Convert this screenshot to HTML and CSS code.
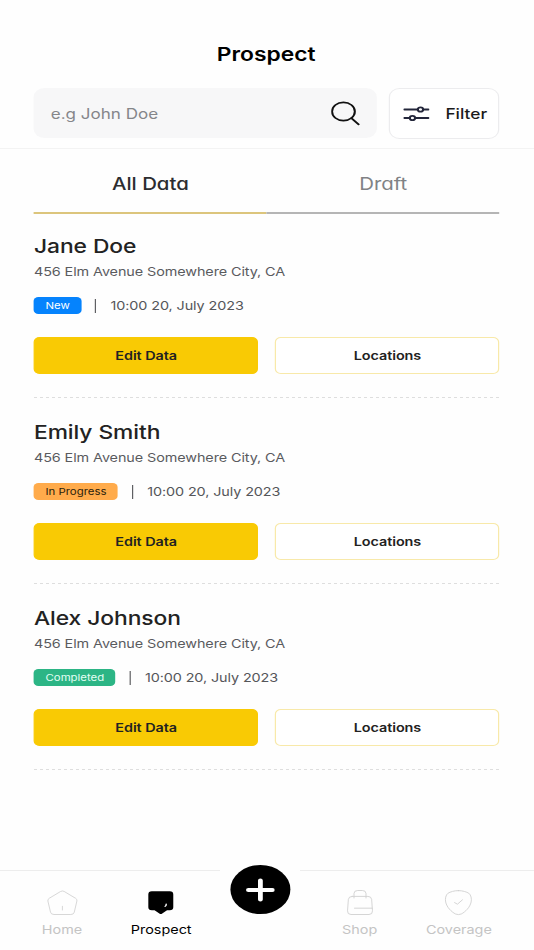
FILE: index.html
```
<!DOCTYPE html>
<html lang="en">
<head>
  <meta charset="UTF-8" />
  <title>Prospect</title>
  <link rel="stylesheet" href="styles.css">
</head>
<body>

<div class="app">
  <header class="header">
    <h1>Prospect</h1>
    <div class="search-row">
      <div class="search">
        <span class="placeholder">e.g John Doe</span>
        <svg class="search-icon" width="24" height="25" viewBox="0 0 24 25" fill="none" stroke="#111" stroke-width="1.7" stroke-linecap="round">
          <ellipse cx="10.2" cy="10.5" rx="9.5" ry="9.2" />
          <path d="M16.8 17.2L22.8 23.4" />
        </svg>
      </div>
      <button class="filter">
        <svg width="22" height="16" viewBox="0 0 22 16" fill="none" stroke="#23263a" stroke-width="1.8" stroke-linecap="round">
          <path d="M1 3.5H12M17 3.5H21M1 12H5.2M10.2 12H21" />
          <circle cx="14.4" cy="3.5" r="2.2" />
          <circle cx="7.7" cy="12" r="2.2" />
        </svg>
        <span>Filter</span>
      </button>
    </div>
  </header>

  <nav class="tabs">
    <a class="tab active">All Data</a>
    <a class="tab">Draft</a>
  </nav>

  <main class="list">
    <section class="item">
      <h2>Jane Doe</h2>
      <p class="address">456 Elm Avenue Somewhere City, CA</p>
      <div class="meta">
        <span class="badge new">New</span>
        <span class="divider"></span>
        <span class="date">10:00 20, July 2023</span>
      </div>
      <div class="actions">
        <button class="btn edit">Edit Data</button>
        <button class="btn outline">Locations</button>
      </div>
    </section>

    <section class="item">
      <h2>Emily Smith</h2>
      <p class="address">456 Elm Avenue Somewhere City, CA</p>
      <div class="meta">
        <span class="badge progress">In Progress</span>
        <span class="divider"></span>
        <span class="date">10:00 20, July 2023</span>
      </div>
      <div class="actions">
        <button class="btn edit">Edit Data</button>
        <button class="btn outline">Locations</button>
      </div>
    </section>

    <section class="item">
      <h2>Alex Johnson</h2>
      <p class="address">456 Elm Avenue Somewhere City, CA</p>
      <div class="meta">
        <span class="badge completed">Completed</span>
        <span class="divider"></span>
        <span class="date">10:00 20, July 2023</span>
      </div>
      <div class="actions">
        <button class="btn edit">Edit Data</button>
        <button class="btn outline">Locations</button>
      </div>
    </section>
  </main>

  <nav class="bottom-nav">
    <a class="nav-item">
      <svg width="26" height="26" viewBox="0 0 26 26" fill="none" stroke="#d2d2d2" stroke-width="0.8" stroke-linecap="round" stroke-linejoin="round">
        <path d="M11.6 1.4Q13 .4 14.4 1.4L24 8.3Q25.5 9.4 25.1 11L22.9 22.2Q22.5 24.5 20 24.5H6Q3.5 24.5 3.1 22.2L.9 11Q.5 9.4 2 8.3Z" />
        <path d="M13 16.3V20" />
      </svg>
      <span>Home</span>
    </a>
    <a class="nav-item active">
      <svg width="26" height="26" viewBox="0 0 26 26">
        <path d="M5.5 1.2H20.5Q23.4 1.2 23.4 4.4V17.2Q23.4 20.2 20.5 20.2H18.2L14.2 23.6Q13 24.6 11.8 23.6L7.8 20.2H5.5Q2.6 20.2 2.6 17.2V4.4Q2.6 1.2 5.5 1.2Z" fill="#000" />
        <path d="M17.5 14.2Q17.6 15.6 16.6 16.4" fill="none" stroke="#fff" stroke-width="1.2" stroke-linecap="round" />
      </svg>
      <span>Prospect</span>
    </a>
    <a class="add">
      <svg width="24" height="24" viewBox="0 0 24 24" fill="none" stroke="#fff" stroke-width="4" stroke-linecap="round">
        <path d="M12 2.4V21.6M2 12H22" />
      </svg>
    </a>
    <a class="nav-item">
      <svg width="26" height="26" viewBox="0 0 26 26" fill="none" stroke="#cfcfcf" stroke-width="0.8" stroke-linecap="round" stroke-linejoin="round">
        <path d="M6.4 6.4H19.6Q22.4 6.4 22.7 9.4L23.4 20.8Q23.6 24.5 20.5 24.5H5.5Q2.4 24.5 2.6 20.8L3.3 9.4Q3.6 6.4 6.4 6.4Z" />
        <path d="M8 8V3.6Q8 .5 11 .5H15Q18 .5 18 3.6V8M8.4 18.2H23.2" />
      </svg>
      <span>Shop</span>
    </a>
    <a class="nav-item">
      <svg width="26" height="26" viewBox="0 0 26 26" fill="none" stroke="#cfcfcf" stroke-width="0.8" stroke-linecap="round" stroke-linejoin="round">
        <path d="M13 .6C16.5 .6 19.8 1.9 21.6 3.2C23.6 4.8 24.2 9.2 23.6 12C22.6 17.5 18.8 21.8 15.4 24Q13 25.2 10.6 24C7.2 21.8 3.4 17.5 2.4 12C1.8 9.2 2.4 4.8 4.4 3.2C6.2 1.9 9.5 .6 13 .6Z" />
        <path d="M9.8 12.6L12.2 14.2L16.4 9.8" />
      </svg>
      <span>Coverage</span>
    </a>
  </nav>
</div>

</body>
</html>
```
FILE: styles.css
```
* {
  box-sizing: border-box;
}

body {
  margin: 0;
  background: #fefefe;
  font-family: Inter, "Liberation Sans", sans-serif;
  color: #222;
  overflow: hidden;
}

/* laid out at 445px and stretched to the full 534px */
.app {
  width: 445px;
  height: 950px;
  display: flex;
  flex-direction: column;
  transform: scaleX(1.2);
  transform-origin: 0 0;
}

h1, h2, p {
  margin: 0;
}

button {
  font-family: inherit;
  padding: 0;
  cursor: pointer;
}

.header {
  height: 149px;
  padding: 42px 28.6px 0 28.3px;
  border-bottom: 1px solid #f3f3f3;
}

h1 {
  font-size: 19px;
  line-height: 26px;
  font-weight: 600;
  text-align: center;
  text-indent: -1px;
  color: #000;
}

.search-row {
  display: flex;
  gap: 10px;
  margin-top: 20px;
}

.search {
  flex: 1;
  height: 50px;
  display: flex;
  justify-content: space-between;
  align-items: center;
  padding: 0 14px;
  background: #f7f7f8;
  border-radius: 9px;
}

.placeholder {
  font-size: 14.2px;
  color: #85868a;
}

.filter {
  width: 92.2px;
  height: 51px;
  display: flex;
  align-items: center;
  justify-content: space-between;
  padding: 0 9.5px 0 11.2px;
  background: #fff;
  border: 1px solid #ececee;
  border-radius: 9px;
  font-size: 14.4px;
  font-weight: 500;
  color: #1b1b1b;
}

.tabs {
  display: flex;
  margin: 0 28.6px 0 28.3px;
}

.tab {
  flex: 1;
  height: 65px;
  padding-top: 23px;
  border-bottom: 2px solid #b5b5b5;
  font-size: 17px;
  line-height: 24px;
  text-align: center;
  color: #808285;
  font-feature-settings: "cv11";
}

.tab.active {
  font-weight: 500;
  color: #2c2d30;
  border-color: #dcc57c;
}

.list {
  flex: 1;
  padding: 0 28.6px 0 28.3px;
}

.item {
  padding: 21px 0 24px;
  background: repeating-linear-gradient(to right, #dedede 0 3px, transparent 3px 5px) left bottom / 100% 1px no-repeat;
}

.item + .item {
  padding-top: 23px;
}

h2 {
  font-size: 19px;
  line-height: 24px;
  font-weight: 500;
  letter-spacing: -0.05px;
}

.address {
  margin-top: 4px;
  font-size: 12px;
  line-height: 18px;
  letter-spacing: -0.08px;
  color: #5a5b5e;
}

.meta {
  display: flex;
  align-items: center;
  margin-top: 16px;
}

.badge {
  height: 17px;
  padding: 0 9.6px;
  border-radius: 4px;
  font-size: 9.5px;
  line-height: 17px;
}

.new {
  background: #0583fd;
  color: #fff;
}

.progress {
  background: #ffab4b;
  color: #2b1d0c;
}

.completed {
  background: #2cb585;
  color: #e3fff4;
}

.divider {
  width: 1px;
  height: 14px;
  margin: 0 12px 0 11.3px;
  background: #5f6063;
}

.date {
  font-size: 12px;
  line-height: 17px;
  letter-spacing: -0.08px;
  color: #55565a;
}

.actions {
  display: grid;
  grid-template-columns: 1fr 1fr;
  gap: 14px;
  margin-top: 22.5px;
}

.btn {
  height: 37.5px;
  padding-top: 1px;
  border: 1px solid #f9ca04;
  border-radius: 5px;
  font-size: 12px;
  font-weight: 600;
  letter-spacing: -0.05px;
  color: #222;
}

.edit {
  background: #f9ca04;
}

.outline {
  background: #fff;
  border-color: #f8e9a9;
}

.bottom-nav {
  height: 80px;
  display: grid;
  grid-template-columns: repeat(5, 82.7px);
  padding-left: 10.3px;
  background: linear-gradient(to right, #ededed 0 183px, transparent 183px 250px, #ededed 250px) left top / 100% 1px no-repeat;
}

.nav-item {
  display: flex;
  flex-direction: column;
  align-items: center;
  padding-top: 20px;
  font-size: 12px;
  line-height: 18px;
  color: #c4c4c4;
}

.nav-item span {
  margin-top: 5px;
}

.nav-item.active {
  color: #000;
}

.add {
  width: 50px;
  height: 49px;
  display: flex;
  align-items: center;
  justify-content: center;
  justify-self: center;
  margin-top: -5px;
  background: #000;
  border-radius: 50%;
}
```
